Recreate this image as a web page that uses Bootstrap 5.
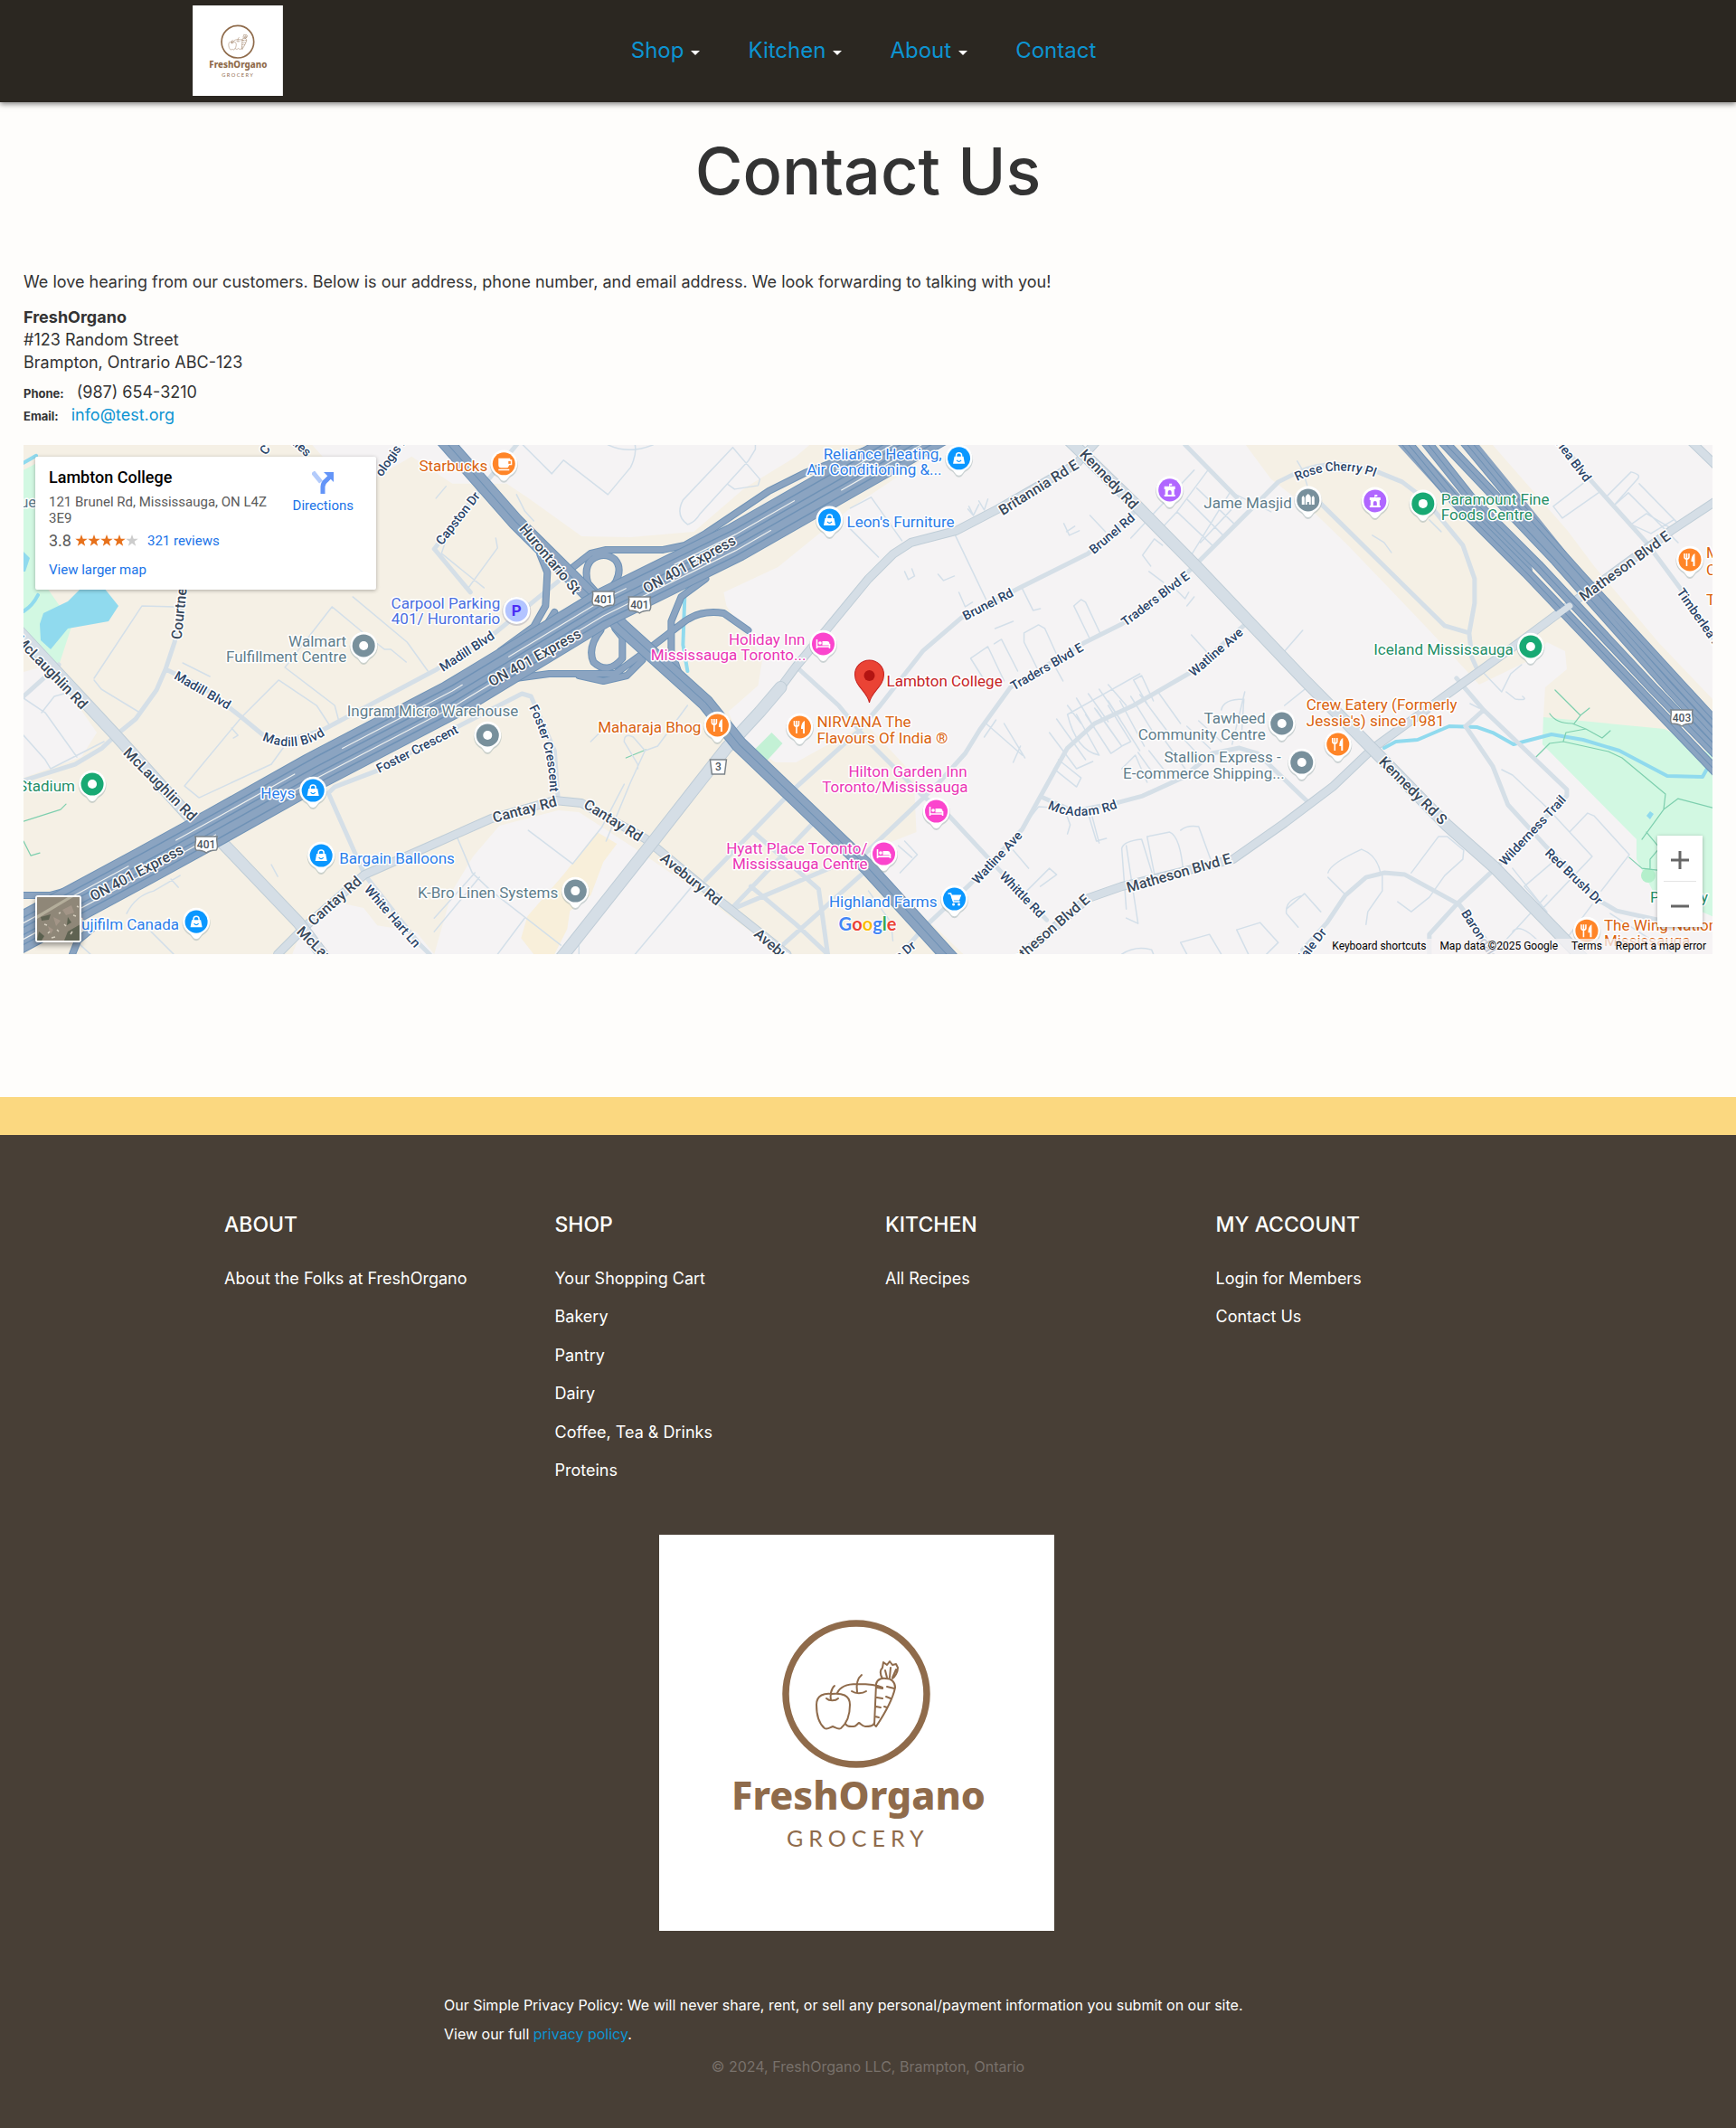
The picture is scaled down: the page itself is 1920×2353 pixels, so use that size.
<!DOCTYPE html>
<html lang="en">
<head>
<meta charset="utf-8">
<meta name="viewport" content="width=device-width, initial-scale=1">
<title>Contact Us - FreshOrgano</title>
<link href="https://cdn.jsdelivr.net/npm/bootstrap@5.3.0/dist/css/bootstrap.min.css" rel="stylesheet">
<style>
  body { background: #fefdfb; color: #333; font: 400 18px/25px Inter, "Open Sans", sans-serif; }
  a { color: #0d94d2; text-decoration: none; }
  .site-nav { background: #2b2721; height: 113px; box-shadow: 0 2px 6px rgba(0,0,0,.5); padding: 0 223px 1px 213px; }
  .side { flex: 1 1 0; }
  .brand-logo { width: 100px; height: 100px; display: block; }
  .menu { gap: 53px; font-size: 24px; line-height: 28px; }
  .menu a { display: flex; align-items: center; gap: 8px; }
  .menu .dropdown-toggle::after { margin: 4px 0 0; border-top-width: 5px; border-left-width: 5px; border-right-width: 5px; color: #fff; }
  .page-title { font-size: 72px; line-height: 80px; font-weight: 500; margin: 36px 0 70px; text-align: center; }
  .page-body { padding: 0 26px; }
  .intro { margin-bottom: 14px; }
  .lbl { font-size: 13px; line-height: 1; font-weight: 700; margin-right: 14px; }
  .map-box { position: relative; height: 563px; margin-top: 21px; overflow: hidden; background: #f5f3f4; font-family: Roboto, sans-serif; }
  .map-art { display: block; width: 100%; height: 100%; }
  .place { position: absolute; left: 13px; top: 13px; width: 377px; height: 147px; padding: 13px 15px; background: #fff; border-radius: 2px; box-shadow: 0 1px 4px rgba(0,0,0,.3); font-size: 15px; line-height: 18px; color: #5b5b5b; }
  .place a { color: #1a73e8; }
  .place h2 { font-size: 18px; line-height: 20px; font-weight: 500; color: #000; margin: 0 0 8px; }
  .place .info { width: 250px; }
  .place .score { font-size: 18px; line-height: 22px; margin-top: 5px; }
  .place .score a { font-size: 15px; }
  .place .go { margin: 3px 10px 0 0; text-align: center; }
  .zoomer { position: absolute; right: 11px; bottom: 30px; width: 50px; background: #fff; box-shadow: 0 1px 4px rgba(0,0,0,.3); }
  .zoomer button { display: block; width: 50px; height: 50px; border: 0; background: none; padding: 0; }
  .zoomer hr { margin: 0 7px; border-color: #999; }
  .layers { position: absolute; left: 13px; bottom: 13px; width: 51px; height: 52px; padding: 0; border: 2px solid #fff; border-radius: 3px; box-shadow: 0 3px 6px rgba(0,0,0,.4); overflow: hidden; background: #827a6b; }
  .credits { position: absolute; right: 0; bottom: 0; height: 17px; padding: 0 7px 0 3px; gap: 15px; background: rgba(245,243,244,.75); font-size: 12px; line-height: 17px; }
  .credits a, .credits button { color: #000; padding: 0; border: 0; background: none; }
  .band { height: 42px; background: #fbd880; margin-top: 158px; }
  .site-foot { background: #483f36; color: #fff; height: 1098px; padding-top: 83px; }
  .foot-cols { max-width: 1462px; margin: 0 auto; --bs-gutter-x: 38px; height: 359px; }
  .foot-cols h3 { font-size: 23px; line-height: 32px; font-weight: 500; margin: 0 0 31px; }
  .foot-cols a { color: #fff; display: block; font-size: 18px; line-height: 26px; margin-bottom: 16px; }
  .foot-cols li:nth-child(even) a { margin-bottom: 17px; }
  .foot-logo { width: 437px; height: 438px; display: block; margin: 0 auto; }
  .logo-wrap { padding-right: 25px; }
  .policy { max-width: 938px; margin: 66px auto 0; font-size: 16px; line-height: 32px; }
  .copy { color: #78716b; font-size: 16px; line-height: 32px; text-align: center; margin-top: 4px; }
  /* map layers */
  .ln { fill: none; stroke-linejoin: round; stroke-linecap: round; }
  .minor { stroke: #d3dfe9; stroke-width: 1.5px; }
  .st { stroke: #d5dfe7; stroke-width: 5px; }
  .md { stroke: #d5dee6; stroke-width: 8px; }
  .mdc { stroke: #bfcdd7; stroke-width: 10px; }
  .lg { stroke: #d5dee6; stroke-width: 12px; }
  .lgc { stroke: #bfcdd7; stroke-width: 14px; }
  .hw { stroke: #8ba4c1; }
  .hwc { stroke: #6f92b6; }
  .trail { stroke: #7dcfae; stroke-width: 1.2px; }
  .creek { stroke: #90daee; stroke-width: 4px; }
  .t { font-family: Roboto, sans-serif; paint-order: stroke; stroke: #fff; stroke-width: 3px; stroke-linejoin: round; }
  .rd { font-size: 14px; font-weight: 500; fill: #2a4468; text-anchor: middle; dominant-baseline: central; }
  .rb { font-size: 16px; font-weight: 500; fill: #38485a; text-anchor: middle; dominant-baseline: central; }
  .poi { font-size: 17px; }
  .e { text-anchor: end; }
  .s { text-anchor: start; }
  .or { fill: #d9620e; color: #ff8528; }
  .bl { fill: #2b7de9; color: #0a97ff; }
  .gr { fill: #258e66; color: #18a974; }
  .sl { fill: #607d8b; color: #78909c; }
  .pk { fill: #ea35b5; color: #fb45cd; }
  .pu { color: #b066ff; }
</style>
<script src="https://cdn.jsdelivr.net/npm/bootstrap@5.3.0/dist/js/bootstrap.bundle.min.js" defer></script>
</head>
<body>

<svg width="0" height="0" class="position-absolute" aria-hidden="true">
  <symbol id="logo" viewBox="0 0 437 438">
    <rect width="437" height="438" fill="#fff"/>
    <g fill="none" stroke="#8f6b4b" stroke-linecap="round" stroke-linejoin="round">
      <circle cx="218" cy="176" r="78" stroke-width="7.500"/>
      <g stroke-width="2">
        <path d="M191 176c-8-1-17 1-17 12 0 12 3 21 9 26 3 2 6-1 9-2 3 1 6 4 9 2 6-5 10-14 10-26 0-11-9-13-20-12zM190 183c-1-5 0-13 4-16M185 181c3 3 10 3 13 0"/>
        <path d="M197 175c3-7 11-10 22-10 12 0 22 1 28 4M219 174c-1-7 0-15 5-19M213 173c4 3 12 3 16 0M206 209c2 4 7 3 9 3 3 0 4-3 6-4 2 1 4 4 7 4 4 0 9 0 10-4"/>
        <path d="M240 212l-2-2 2-45c1-5 6-7 11-6 6 0 10 4 10 10-3 15-15 34-21 43M241 169l6 1M252 168l8 2M241 180l6 1M251 179l5 2M240 190l5 1M249 190l3 1M239 201l4 1"/>
        <path d="M247 159c-3-5-3-9 0-12l1-6 4 3 3-4 3 4 4-1 2 4c0 5-3 10-6 12M252 158l-2-8M255 158l1-11M258 158l4-9"/>
      </g>
    </g>
    <text x="80" y="304" font-family="'Noto Sans', 'Open Sans', sans-serif" font-weight="800" font-size="43" fill="#8f6b4b">FreshOrgano</text>
    <text x="141" y="345" font-family="Lato, sans-serif" font-size="25" letter-spacing="6" fill="#8f6b4b">GROCERY</text>
  </symbol>
</svg>

<header>
  <nav class="site-nav d-flex align-items-center" aria-label="Main">
    <div class="side"><a href="#" aria-label="FreshOrgano Grocery"><svg class="brand-logo"><use href="#logo"/></svg></a></div>
    <ul class="menu list-unstyled d-flex mb-0">
      <li><a href="#" class="dropdown-toggle">Shop</a></li>
      <li><a href="#" class="dropdown-toggle">Kitchen</a></li>
      <li><a href="#" class="dropdown-toggle">About</a></li>
      <li><a href="#">Contact</a></li>
    </ul>
    <div class="side"></div>
  </nav>
</header>

<main>
  <h1 class="page-title">Contact Us</h1>
  <div class="page-body">
    <p class="intro">We love hearing from our customers. Below is our address, phone number, and email address. We look forwarding to talking with you!</p>
    <address class="mb-2"><strong>FreshOrgano</strong><br>#123 Random Street<br>Brampton, Ontrario ABC-123</address>
    <address class="mb-0"><span class="lbl">Phone:</span>(987) 654-3210<br><span class="lbl">Email:</span><a href="mailto:info@test.org">info@test.org</a></address>

    <section class="map-box" aria-label="Map">
      <svg class="map-art" viewBox="26 492 1867 563" preserveAspectRatio="xMidYMid slice">
        <defs>
          <g id="pin"><path d="M0 21c-3 0-4-3-7-6a15.500 15.500 0 1 1 14 0c-3 3-4 6-7 6z" fill="#9aa" opacity=".45"/><path d="M0 19c-3 0-4-3-7-6a15 15 0 1 1 14 0c-3 3-4 6-7 6z" fill="#fff"/><circle r="12.500" fill="currentColor"/></g>
          <g id="dot"><use href="#pin"/><circle r="5" fill="#fff"/></g>
          <g id="bag"><use href="#pin"/><path d="M-3-1v-2a3 3 0 0 1 6 0v2" fill="none" stroke="#fff" stroke-width="1.500"/><path d="M-5-2h10l1.500 8h-13z" fill="#fff"/><path d="M-2.500 2q2.500 3 5 0" fill="none" stroke="currentColor" stroke-width="1.200"/></g>
          <g id="fork"><use href="#pin"/><path d="M-6-7v4q0 2 2.500 2t2.500-2v-4M-3.500-7v14" fill="none" stroke="#fff" stroke-width="1.600"/><path d="M5.500-7v14h-2v-5h-2q0-7 4-9z" fill="#fff"/></g>
          <g id="bed"><use href="#pin"/><path d="M-7-5v10M-7 3h14M7 5v-5" stroke="#fff" stroke-width="1.600" fill="none"/><path d="M-1-3h5q3 0 3 3v1.500h-8z" fill="#fff"/><circle cx="-3.500" cy="-1" r="1.800" fill="#fff"/></g>
          <g id="fort"><use href="#pin"/><path d="M-6-4h12v3h-1v6h1v2h-12v-2h1v-6h-1zM-.5-7h3v2h-2v2h-1z" fill="#fff"/><path d="M-2 5v-3a2 2 0 0 1 4 0v3z" fill="currentColor"/></g>
          <g id="shield"><path d="M-12-9h24q-1 3 0 7 1 6-1 8-7 0-11 3-4-3-11-3-2-2-1-8 1-4 0-7z" fill="#fff" stroke="#7c848a" stroke-width="1.500"/></g>
          <path id="p401" d="M10 1038L160 957L240 913L347 853L500 773L667 672L813 600L960 516L1045 468"/>
          <path id="phur" d="M485 480L570 577L687 693L780 777L817 823L960 960L1060 1070"/>
          <path id="t1" d="M286 811Q325 832 362 805"/>
          <path id="t2" d="M588 778Q612 822 613 878"/>
          <path id="t3" d="M1156 887Q1190 907 1238 887"/>
          <path id="t4" d="M1429 529Q1475 505 1524 524"/>
        </defs>

        <rect x="26" y="492" width="1867" height="563" fill="#f5f0e5"/>
        <g fill="#f5f3f4">
          <path d="M345 492L370 520L395 540L412 530L455 505L500 535H560L583 550L643 593L697 594L767 588L823 540L880 505L895 492z"/>
          <path d="M1045 492L940 562L860 627L800 655L803 670L843 727L838 758L805 787L817 815L857 843H880L957 800L1010 857L1013 920L950 945L1065 1055H1893V492z"/>
          <path d="M523 947L552 913L617 896L640 898L700 937L763 980L863 1055H480L500 985z"/>
          <path d="M26 743L55 735L107 810L90 837L26 860zM323 1055L333 1030L370 997L402 1004L417 1023L460 1030L480 1055z"/>
          <path d="M26 535L39 520V590H26z"/>
        </g>
        <path fill="#f5f0e5" d="M1377 492L1405 530L1453 567L1490 603L1580 697L1635 757L1697 727L1710 710L1730 720L1732 740L1708 760L1706 795L1893 840V773L1833 710L1763 627L1733 587L1650 492z"/>
        <path fill="#f8efda" d="M660 920L682 933L667 953L653 990L630 1007L627 1027L613 1055H590L576 1037L583 1013L623 967z"/>
        <path fill="#d2f8e2" d="M1706 793L1840 806L1893 835V1013L1827 985L1809 950V928L1705 823zM26 520L45 510V640L80 690L63 742L26 704z"/>
        <path fill="#c3f1d5" d="M833 830L853 810L865 822L847 842z"/>
        <circle cx="1822" cy="968" r="8" fill="#b4efcb"/>
        <path fill="#90daee" d="M48 678L75 665L90 650H115L131 670L120 687L75 695L56 718L45 708L44 690zM26 610L33 617L28 632H26zM1820 902l4-5 4 3-4 6z"/>
        <path class="ln creek" d="M26 676Q36 670 42 658M26 512L40 504M765 643L757 657L755 713L760 742M1530 827L1543 820L1567 818L1602 803L1633 804L1650 810L1673 823L1715 812L1750 818L1790 830L1843 858L1882 859L1887 850"/>
        <path class="ln trail" d="M1719 763L1747 791L1757 783M1740 800L1747 791M1713 789Q1720 800 1738 800L1753 806L1771 816L1780 808M1728 820L1731 810L1753 806M1698 837L1713 822L1728 820L1778 831L1793 838L1841 878L1839 895L1815 928M1820 920L1845 950M1801 948L1815 960L1832 962M1824 960V950L1834 938M26 908L67 895L73 889M26 930L34 946L44 943M692 838L714 829M1893 893L1855 883L1839 895"/>

        <!-- lanes, driveways and residential streets -->
        <path class="ln minor" d="M578 492L610 524L623 509L672 547L697 517Q704 503 702 492M672 492Q695 503 722 492M810 495L755 553Q746 570 760 580Q768 578 774 568L827 510M810 495L840 530L838 537L812 541L805 536M827 510L835 497V492
          M492 600L488 612L535 650M548 595L550 606L517 651M482 551L493 538M571 547L580 565L590 576M380 607L360 640M104 750L157 670L195 671M104 752L112 762L153 787M202 733L232 748
          M315 738L367 671L402 700L425 718H432L449 732M315 738L370 780L374 795M390 660L450 710L473 742M267 793L308 752L350 780L365 803M267 793L204 869L220 882L300 845L313 827M256 805L263 813L258 816M26 772L50 788L85 837M46 788L60 770L78 765M26 813L50 840L56 850L115 820M140 1010Q150 990 170 985L199 968M189 972L197 981M300 956L307 969M88 1044L100 1055M167 1030L192 1055
          M690 867L665 915L633 955L584 918M713 830L697 865L670 930M760 780L727 825L713 830L700 815Q690 810 690 820L705 845V850M653 820L665 808
          M505 925L522 965L543 985L620 1045M580 1015L550 1055M480 1030L530 970M480 1015L525 965M765 980L702 1055M640 1055V1045
          M940 562L963 550L997 598M940 585L971 616M1055 590L1090 663M1070 563L1076 570M1071 560L1076 570L1082 558M1082 554L1088 564L1092 552M1176 579L1182 592L1193 587M1179 588L1188 582M1205 570L1222 588M1000 632L1004 641L1011 637L1008 629M1037 635L1043 642L1055 637M1060 655L1067 671L1075 666M1130 651L1142 675L1150 673M1100 695L1120 687
          M1187 670L1195 663L1200 666L1216 700M1187 670L1205 707M1132 710V700L1148 691L1155 695L1170 728M1132 710L1147 740M1073 728L1092 715L1110 753M1099 712L1107 707L1125 742M1073 728L1090 755M1165 735L1175 753
          M1263 614L1276 596L1285 603M1263 614L1272 626M1250 595L1320 520M1270 632L1286 644M1300 652L1310 662L1314 655M1312 670L1320 660M1317 702L1335 722M1310 492L1360 545M1310 492L1336 519L1301 566L1340 603M1301 566L1286 582M1312 552L1352 592M1323 540L1365 580M1318 612L1360 544L1405 566M1327 600L1372 552
          M1180 780L1195 800M1190 772L1210 805M1203 767L1225 798M1215 762L1238 795M1225 757L1245 780M1253 752L1268 778M1253 752L1262 747L1275 775M1180 790L1260 745M1168 795L1200 840M1160 810L1190 850L1208 842M1180 790Q1190 830 1215 835L1190 790M1200 790L1228 833L1240 825L1210 783M1212 785L1240 825L1250 820L1225 780M1225 775L1260 830M1238 775L1265 825M1250 770L1278 815M1260 768L1290 808M1280 765L1305 800M1165 850L1190 870L1195 860L1170 840M1240 850L1255 835L1268 865M1258 832L1278 860M1270 830L1292 858M1285 815L1310 850M1300 808L1325 835M1312 803L1338 828M1325 797L1350 820M1350 785Q1352 773 1375 773L1372 820M1376 765L1362 823
          M1245 1015L1258 1021M1245 1005L1240 938Q1242 930 1262 928L1275 970M1268 925L1293 920Q1305 925 1308 965M1268 925L1276 966M1305 918Q1312 912 1325 914L1340 955M1245 935L1258 1021M1240 1055Q1255 1045 1273 1050L1275 1055M1305 1042L1337 1033L1350 1055M1305 1042L1312 1055M1367 1028L1393 1020L1413 1042L1400 1055M1367 1028L1380 1055M1440 990Q1420 995 1422 1010L1435 1025M1110 800L1133 838M1090 800L1130 835M1128 825L1120 843M1101 796L1088 815M1130 915L1148 892L1165 893M1175 890L1183 912L1180 922M1203 900L1212 930L1223 927M1206 898L1215 932M1120 940L1137 960M1135 985L1160 960L1168 967L1150 980M1000 930L1014 945L995 965M993 935L1008 948M960 985L985 1020L987 1040
          M1422 1005L1442 988L1460 1008M1468 965Q1470 955 1505 939Q1522 945 1526 965M1468 970L1488 990M1560 965L1590 925L1600 925L1618 940L1617 950L1597 968L1580 992L1560 1008L1545 997M1528 968V985L1512 1008L1510 1022M1660 851L1672 857L1710 893L1760 947L1700 1010M1735 920L1755 899L1762 902L1801 945L1770 985M1720 950L1685 980L1710 1008L1672 960M1635 783L1625 778M1638 742L1660 765L1670 745L1682 735M1665 765L1675 773Q1690 775 1683 770M1710 990L1650 1055M1672 1030Q1680 1020 1700 1040M1760 1000L1730 1040M1780 1010L1850 1055
          M1517 592L1530 600L1538 611M1580 575L1593 588M1434 510L1440 520L1445 537M1752 533L1717 560L1727 573L1767 545M1775 550L1803 522Q1815 525 1810 530L1783 560M1812 535L1853 577M1783 560L1800 545L1855 600M1803 580L1820 568L1845 583M1803 580L1825 590L1850 575M1420 780L1445 760M1420 720L1440 697"/>

        <!-- local streets -->
        <path class="ln st" d="M205 650L193 710L183 740L173 763L150 795L128 813L113 827L83 845L26 863M183 740L225 760L267 793L290 812L313 820L357 807L483 740L547 700L617 643M480 607L532 540L575 487M480 607L520 655M363 877L403 967L463 1043L475 1055M363 877L370 870L417 852L507 803L577 767L587 770L613 830L617 885M65 735L26 770
          M1020 720L973 780L947 810L877 873L780 973M1020 720L1063 683L1127 650L1203 612L1253 567M880 737L927 780L960 820L1020 880L1050 903L1103 960L1157 1017M1433 523L1413 533L1323 623L1290 655L1240 690L1200 710L1117 760L1083 807L1067 833L1040 863L1020 883L957 943L810 1005M1433 523Q1475 505 1523 522L1550 533L1575 552L1617 603L1630 640L1630 667L1624 700L1627 727L1632 738M1445 545L1460 557L1597 692L1624 700
          M1377 690L1317 743L1253 780L1210 800L1180 827L1167 850L1130 917L1073 977L1020 1027L1000 1050M1153 882L1187 897L1233 888L1263 880L1307 860L1340 833L1370 827L1390 833L1447 888M1727 492L1760 533L1820 600L1857 650L1893 705M1310 492L1367 550M1640 785L1732 873V880L1653 960L1610 1000L1580 1033V1055M1640 785L1620 803L1650 847L1667 890L1710 937L1770 997L1787 1007L1833 1017M1440 1050L1467 1020L1487 990L1510 970L1530 965L1553 967L1613 1000L1647 1045M833 920L905 983L915 1055M830 980L880 1022L915 1055M897 912L810 1003M960 960L865 1045M1640 785L1610 750"/>
        <g id="avenues">
          <path class="ln mdc" d="M307 1055L340 1022L403 967L480 933L543 905L613 885L643 888L713 927L797 997L870 1055M863 760L880 737L960 640L987 613L1007 600L1057 587L1103 563L1190 513L1215 485M1900 552L1847 587L1743 663L1680 710L1587 777L1517 828L1473 870L1420 910L1363 950L1240 980L1203 993L1125 1060M1868 487L1898 516"/>
          <path class="ln md" d="M307 1055L340 1022L403 967L480 933L543 905L613 885L643 888L713 927L797 997L870 1055M863 760L880 737L960 640L987 613L1007 600L1057 587L1103 563L1190 513L1215 485M1900 552L1847 587L1743 663L1680 710L1587 777L1517 828L1473 870L1420 910L1363 950L1240 980L1203 993L1125 1060M1868 487L1898 516"/>
          <path class="ln lgc" d="M20 697L128 813L213 907L247 933L330 1020L360 1060M618 1062L720 933L803 827L840 787L863 760M1182 487L1257 560L1323 627L1440 750L1517 828L1600 913L1653 960L1750 1060"/>
          <path class="ln lg" d="M20 697L128 813L213 907L247 933L330 1020L360 1060M618 1062L720 933L803 827L840 787L863 760M1182 487L1257 560L1323 627L1440 750L1517 828L1600 913L1653 960L1750 1060"/>
        </g>

        <!-- expressways and ramps -->
        <g class="ln">
          <g class="hwc" stroke-width="8">
            <path id="ramps" d="M672 655L681 643Q688 628 680 619Q668 609 654 619Q645 628 650 645L665 662M680 695L688 705V728Q672 747 656 732Q649 716 664 697M630 630L653 612L670 608H733L757 603L780 590L850 543L890 523L960 497M597 613L605 633L603 670L590 693L553 720M613 677L603 693L585 710M533 765L570 750L607 745H680L710 723L757 687Q775 674 800 678L827 697M780 640L753 660L742 687V720L750 743M640 747L667 753L693 747L710 730M26 990H55L110 975M80 1055L86 1040L110 1020"/>
          </g>
          <use href="#ramps" class="hw" stroke-width="6"/>
          <use href="#phur" class="hwc" stroke-width="18"/><use href="#phur" class="hw" stroke-width="16"/><use href="#phur" class="hwc" stroke-width="1"/>
          <use href="#p401" class="hwc" stroke-width="43"/><use href="#p401" class="hw" stroke-width="41"/>
          <g class="hwc" stroke-width="1.500"><use href="#p401" y="-15"/><use href="#p401" y="-4"/><use href="#p401" y="4"/><use href="#p401" y="15"/></g>
          <g stroke="#eef0ee" stroke-width="1.200"><use href="#p401" y="-9" stroke-dasharray="150 60"/><use href="#p401" y="9" stroke-dasharray="260 90"/></g>
          <path class="hw" stroke-width="14" d="M1550 487L1610 553L1687 630"/>
          <path class="hw" stroke-width="14" d="M1622 487L1690 570L1750 645"/>
          <g class="hwc" stroke-width="12"><path id="h403" d="M1553 487L1610 556L1687 633L1810 762L1900 856M1575 487L1625 550L1700 625L1828 762L1900 836M1594 487L1720 620L1846 762L1900 820M1618 487L1680 562L1750 640L1862 762L1900 803"/></g>
          <use href="#h403" class="hw" stroke-width="10"/><use href="#h403" class="hwc" stroke-width="1"/>
          <path stroke="#d5dee6" stroke-width="7" d="M1680 710L1735 670"/>
        </g>

        <!-- street names -->
        <g class="t rd">
          <text transform="translate(224 763) rotate(30)">Madill Blvd</text>
          <text transform="translate(516 720) rotate(-33)">Madill Blvd</text>
          <text><textPath href="#t1" startOffset="50%">Madill Blvd</textPath></text>
          <text transform="translate(461 828) rotate(-27)">Foster Crescent</text>
          <text><textPath href="#t2" startOffset="50%">Foster Crescent</textPath></text>
          <text transform="translate(506 573) rotate(-52)">Capston Dr</text>
          <text transform="translate(434 1013) rotate(49)">White Hart Ln</text>
          <text transform="translate(1092 668) rotate(-27)">Brunel Rd</text>
          <text transform="translate(1229 590) rotate(-40)">Brunel Rd</text>
          <text transform="translate(1157 737) rotate(-30)">Traders Blvd E</text>
          <text transform="translate(1277 662) rotate(-37)">Traders Blvd E</text>
          <text transform="translate(1344 721) rotate(-41)">Watline Ave</text>
          <text transform="translate(1102 948) rotate(-47)">Watline Ave</text>
          <text transform="translate(1130 989) rotate(46)">Whittle Rd</text>
          <text><textPath href="#t3" startOffset="50%">McAdam Rd</textPath></text>
          <text><textPath href="#t4" startOffset="50%">Rose Cherry Pl</textPath></text>
          <text class="e" transform="translate(1756 531) rotate(53)">Timberlea Blvd</text>
          <text class="s" transform="translate(1857 652) rotate(55)">Timberlea Blvd</text>
          <text transform="translate(1694 918) rotate(-47)">Wilderness Trail</text>
          <text transform="translate(1740 969) rotate(44)">Red Brush Dr</text>
          <text class="s" transform="translate(1619 1007) rotate(57)">Barondale Dr</text>
          <text class="e" transform="translate(1463 1028) rotate(-52)">Barondale Dr</text>
          <text class="e" transform="translate(1010 1043) rotate(-40)">s Dr</text>
          <text class="s" transform="translate(418 525) rotate(-55)">ologis Blvd</text>
          <text class="e" transform="translate(342 502) rotate(42)">ules</text>
          <text class="s" transform="translate(290 501) rotate(-55)">C</text>
        </g>
        <g class="t rb">
          <text transform="translate(57 743) rotate(46)">McLaughlin Rd</text>
          <text transform="translate(177 867) rotate(45)">McLaughlin Rd</text>
          <text class="s" transform="translate(331 1027) rotate(45)">McLaughlin Rd</text>
          <text class="s" transform="translate(195 707) rotate(-84)">Courtneypark</text>
          <text transform="translate(151 965) rotate(-28)">ON 401 Express</text>
          <text transform="translate(591 727) rotate(-29)">ON 401 Express</text>
          <text transform="translate(762 624) rotate(-29)">ON 401 Express</text>
          <text transform="translate(608 618) rotate(50)">Hurontario St</text>
          <text transform="translate(580 895) rotate(-15)">Cantay Rd</text>
          <text transform="translate(678 907) rotate(32)">Cantay Rd</text>
          <text transform="translate(370 996) rotate(-42)">Cantay Rd</text>
          <text transform="translate(764 972) rotate(39)">Avebury Rd</text>
          <text class="s" transform="translate(836 1030) rotate(40)">Avebury Rd</text>
          <text transform="translate(1148 539) rotate(-32)">Britannia Rd E</text>
          <text transform="translate(1226 530) rotate(46)">Kennedy Rd</text>
          <text transform="translate(1562 874) rotate(45)">Kennedy Rd S</text>
          <text class="e" transform="translate(1202 992) rotate(-41)">Matheson Blvd E</text>
          <text transform="translate(1303 965) rotate(-16)">Matheson Blvd E</text>
          <text transform="translate(1796 626) rotate(-36)">Matheson Blvd E</text>
        </g>

        <!-- route shields -->
        <g font-family="Roboto, sans-serif" font-size="12" font-weight="500" fill="#4c5560" text-anchor="middle">
          <use href="#shield" x="667" y="663"/><text x="667" y="667">401</text>
          <use href="#shield" x="707" y="669"/><text x="707" y="673">401</text>
          <use href="#shield" x="228" y="934"/><text x="228" y="938">401</text>
          <use href="#shield" x="1859" y="794"/><text x="1859" y="798">403</text>
          <path d="M785 840h18l-2 16h-14z" fill="#fff" stroke="#7c848a" stroke-width="1.500"/><text x="794" y="852">3</text>
        </g>

        <!-- places -->
        <g class="t poi or">
          <text class="e" x="539" y="521">Starbucks</text>
          <text class="e" x="775" y="810">Maharaja Bhog</text>
          <text x="903" y="804">NIRVANA The</text><text x="903" y="822">Flavours Of India ®</text>
          <text x="1444" y="785">Crew Eatery (Formerly</text><text x="1444" y="803">Jessie's) since 1981</text>
          <text x="1886" y="617">Mi</text><text x="1886" y="636">Co</text><text x="1886" y="669">Th</text>
          <text x="1773" y="1029">The Wing Nation</text><text x="1773" y="1046">Mississauga</text>
        </g>
        <g class="t poi bl">
          <text class="e" x="1041" y="508">Reliance Heating,</text><text class="e" x="1041" y="525">Air Conditioning &amp;...</text>
          <text x="936" y="583">Leon's Furniture</text>
          <text class="e" x="1036" y="1003">Highland Farms</text>
          <text class="e" x="326" y="883">Heys</text>
          <text x="375" y="955">Bargain Balloons</text>
          <text class="e" x="198" y="1028">Fujifilm Canada</text>
          <g fill="#4a6ee0"><text class="e" x="553" y="673">Carpool Parking</text><text class="e" x="553" y="690">401/ Hurontario</text></g>
        </g>
        <g class="t poi gr">
          <text class="e" x="83" y="875">Stadium</text>
          <text x="1593" y="558">Paramount Fine</text><text x="1593" y="575">Foods Centre</text>
          <text class="e" x="1673" y="724">Iceland Mississauga</text>
          <text x="1824" y="998">Parkway</text>
        </g>
        <g class="t poi sl">
          <text x="22" y="561">ue</text>
          <text class="e" x="383" y="715">Walmart</text><text class="e" x="383" y="732">Fulfillment Centre</text>
          <text class="e" x="573" y="792">Ingram Micro Warehouse</text>
          <text class="e" x="617" y="993">K-Bro Linen Systems</text>
          <text class="e" x="1428" y="562">Jame Masjid</text>
          <text class="e" x="1399" y="800">Tawheed</text><text class="e" x="1399" y="818">Community Centre</text>
          <text class="e" x="1416" y="843">Stallion Express -</text><text class="e" x="1420" y="861">E-commerce Shipping...</text>
        </g>
        <g class="t poi pk">
          <text class="e" x="890" y="713">Holiday Inn</text><text class="e" x="891" y="730">Mississauga Toronto...</text>
          <text class="e" x="1069" y="859">Hilton Garden Inn</text><text class="e" x="1070" y="876">Toronto/Mississauga</text>
          <text class="e" x="959" y="944">Hyatt Place Toronto/</text><text class="e" x="959" y="961">Mississauga Centre</text>
        </g>
        <text class="t poi" x="980" y="759" fill="#c5221f">Lambton College</text>

        <g class="or">
          <use href="#pin" x="557" y="513"/><path d="M551 507h13v1.500h2v6h-3q-1 3-3 3h-6q-3 0-3-3zM551 519h12v1.500h-12z" fill="#fff"/><path d="M562 510h2.500v3h-2.500z" fill="#ff8528"/>
          <use href="#fork" x="793" y="802"/><use href="#fork" x="884" y="804"/><use href="#fork" x="1479" y="823"/><use href="#fork" x="1868" y="619"/><use href="#fork" x="1754" y="1029"/>
        </g>
        <g class="bl">
          <use href="#bag" x="917" y="575"/><use href="#bag" x="1060" y="507"/><use href="#bag" x="346" y="874"/><use href="#bag" x="355" y="946"/><use href="#bag" x="217" y="1019"/>
          <use href="#pin" x="1055" y="994"/><path d="M1048 988h3l3 9h7" fill="none" stroke="#fff" stroke-width="1.500"/><path d="M1052 990h10l-2 5h-7z" fill="#fff" stroke="#fff"/><circle cx="1054" cy="1000" r="1.500" fill="#fff"/><circle cx="1060" cy="1000" r="1.500" fill="#fff"/>
        </g>
        <circle cx="571" cy="676" r="16" fill="#99a" opacity=".4"/><circle cx="571" cy="675" r="15" fill="#fff"/><circle cx="571" cy="675" r="12.500" fill="#b3c4ff"/><text x="571" y="681" text-anchor="middle" font-family="Roboto, sans-serif" font-weight="700" font-size="17" fill="#4a2df5">P</text>
        <g class="gr"><use href="#dot" x="102" y="867"/><use href="#dot" x="1573" y="557"/><use href="#dot" x="1692" y="715"/></g>
        <g class="sl"><use href="#dot" x="402" y="714"/><use href="#dot" x="539" y="813"/><use href="#dot" x="636" y="985"/><use href="#dot" x="1417" y="800"/><use href="#dot" x="1439" y="843"/>
          <use href="#pin" x="1446" y="553"/><path d="M1439 558v-8l1.500-2 1.500 2v8zM1450 558v-8l1.500-2 1.500 2v8zM1443 558v-8q0-2 3-4 3 2 3 4v8h-2v-3h-2v3z" fill="#fff"/></g>
        <g class="pk"><use href="#bed" x="910" y="712"/><use href="#bed" x="1035" y="897"/><use href="#bed" x="977" y="944"/></g>
        <g class="pu"><use href="#fort" x="1293" y="542"/><use href="#fort" x="1520" y="554"/></g>
        <path d="M961 777c-2-12-16-18-16-31a16 16 0 0 1 32 0c0 13-14 19-16 31z" fill="#ea4335" stroke="#c5221f"/><circle cx="961" cy="747" r="6" fill="#b31412"/>

        <text x="959" y="1029" text-anchor="middle" font-family="Lato, sans-serif" font-size="20" font-weight="700" stroke="#fff" stroke-width="2" paint-order="stroke"><tspan fill="#4285f4">G</tspan><tspan fill="#ea4335">o</tspan><tspan fill="#fbbc05">o</tspan><tspan fill="#4285f4">g</tspan><tspan fill="#34a853">l</tspan><tspan fill="#ea4335">e</tspan></text>
      </svg>

      <div class="place d-flex justify-content-between align-items-start">
        <div class="info">
          <h2>Lambton College</h2>
          <div>121 Brunel Rd, Mississauga, ON L4Z 3E9</div>
          <div class="score d-flex align-items-center">3.8
            <svg class="ms-1 me-2" width="72" height="16" viewBox="0 0 72 16" aria-label="3.8 stars"><defs><path id="star" d="M7 1l1.700 4.700 5 .1-4 3 1.500 4.900L7 10.800l-4.200 2.900 1.500-4.900-4-3 5-.1z"/></defs><g fill="#e7711b"><use href="#star"/><use href="#star" x="14"/><use href="#star" x="28"/><use href="#star" x="42"/></g><use href="#star" x="56" fill="#ccc"/></svg>
            <a href="#">321 reviews</a>
          </div>
          <div class="mt-2 pt-1"><a href="#">View larger map</a></div>
        </div>
        <a href="#" class="go"><svg class="d-block mx-auto mb-1" width="24" height="25" viewBox="0 0 24 25"><path d="M1 1l9 11" stroke="#b3cbfb" stroke-width="5"/><path d="M12 25v-8q0-4 4-7l4-4" fill="none" stroke="#6495f8" stroke-width="5"/><path d="M13 1h11v11z" fill="#6495f8"/></svg>Directions</a>
      </div>

      <button class="layers" type="button" aria-label="Show satellite imagery"><svg class="d-block" width="48" height="48" viewBox="0 0 48 48"><rect width="48" height="48" fill="#8f8778"/><path d="M0 20L34 0h6L0 24z" fill="#b4ae9b"/><path d="M4 22l11-3-2 6-8 1zM34 38l14-8v18H30z" fill="#5f6352"/><path d="M34 22l4 6-5 3zM2 38l6 5-3 5H0z" fill="#5a604e"/><path d="M18 22l8 4-5 6zM28 14l10-5 3 8-9 3zM12 32l6 4-3 5z" fill="#a39587"/><path d="M22 36l2 2M40 20l3 1M8 30l3 1M30 30l2 2M16 45l4-1M37 41l2-3M24 18l2-1M44 10l2 1M12 40l2-2" stroke="#d6cfbf" stroke-width="1.500"/></svg></button>
      <div class="zoomer">
        <button type="button" aria-label="Zoom in"><svg width="20" height="20"><path d="M0 10h20M10 0v20" stroke="#666" stroke-width="3"/></svg></button>
        <hr>
        <button type="button" aria-label="Zoom out"><svg width="20" height="20"><path d="M0 10h20" stroke="#666" stroke-width="3"/></svg></button>
      </div>
      <div class="credits d-flex"><button type="button">Keyboard shortcuts</button><span class="text-black">Map data ©2025 Google</span><a href="#">Terms</a><a href="#">Report a map error</a></div>
    </section>
  </div>
</main>

<div class="band"></div>
<footer class="site-foot">
  <div class="row foot-cols">
    <div class="col-3"><h3>ABOUT</h3><ul class="list-unstyled"><li><a href="#">About the Folks at FreshOrgano</a></li></ul></div>
    <div class="col-3"><h3>SHOP</h3><ul class="list-unstyled"><li><a href="#">Your Shopping Cart</a></li><li><a href="#">Bakery</a></li><li><a href="#">Pantry</a></li><li><a href="#">Dairy</a></li><li><a href="#">Coffee, Tea &amp; Drinks</a></li><li><a href="#">Proteins</a></li></ul></div>
    <div class="col-3"><h3>KITCHEN</h3><ul class="list-unstyled"><li><a href="#">All Recipes</a></li></ul></div>
    <div class="col-3"><h3>MY ACCOUNT</h3><ul class="list-unstyled"><li><a href="#">Login for Members</a></li><li><a href="#">Contact Us</a></li></ul></div>
  </div>
  <div class="logo-wrap"><svg class="foot-logo" role="img" aria-label="FreshOrgano Grocery"><use href="#logo"/></svg></div>
  <div class="policy">Our Simple Privacy Policy: We will never share, rent, or sell any personal/payment information you submit on our site.<br>View our full <a href="#">privacy policy</a>.</div>
  <div class="copy">© 2024, FreshOrgano LLC, Brampton, Ontario</div>
</footer>
</body>
</html>
